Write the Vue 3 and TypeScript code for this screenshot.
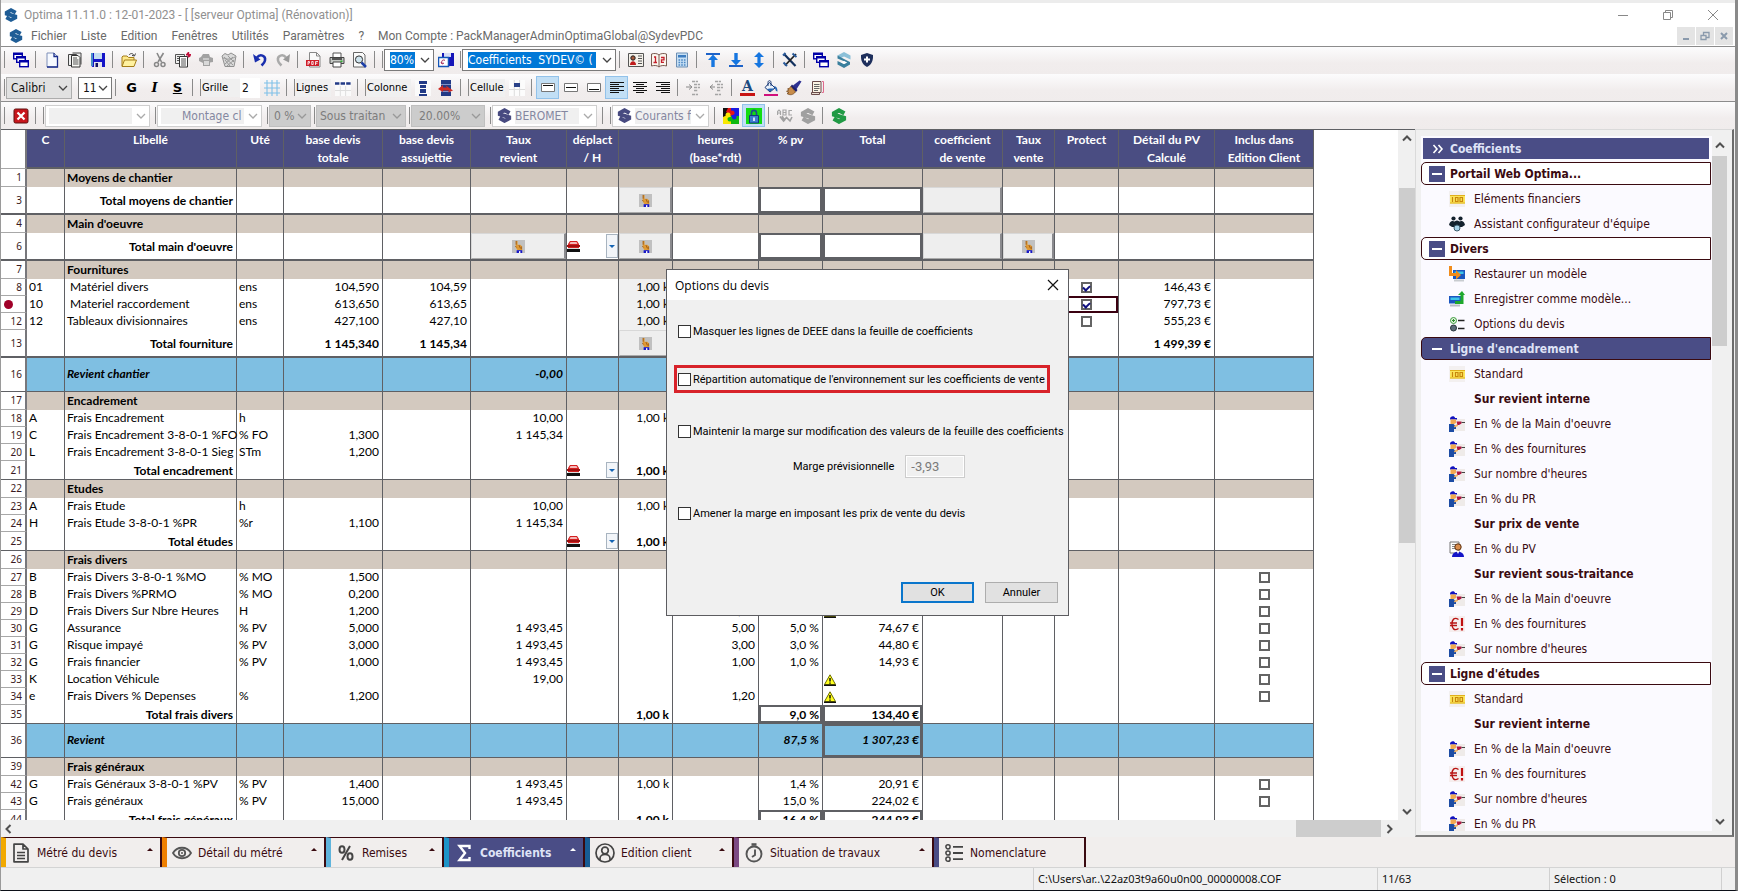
<script setup lang="ts">
type Kind = 'text' | 'button' | 'hand' | 'box' | 'car' | 'on' | 'off' | 'warn'
interface Cell { kind: Kind; text: string; shade?: boolean; focus?: boolean }
interface Column { key: string; title: string; w: number; align: 'start' | 'end' | 'center' }
interface Row { n: string; type: string; cells: Record<string, Cell | string> }
interface SideItem { label: string; icon?: string; type: 'group' | 'active' | 'item' | 'sub' }
interface Tab { label: string; icon: string; tone: string; w: number; active?: boolean; last?: boolean }

const columns: Column[] = [
  { key: 'c', title: 'C', w: 38, align: 'start' },
  { key: 'l', title: 'Libellé', w: 172, align: 'start' },
  { key: 'u', title: 'Uté', w: 47, align: 'start' },
  { key: 'bt', title: 'base devis\ntotale', w: 99, align: 'end' },
  { key: 'ba', title: 'base devis\nassujettie', w: 88, align: 'end' },
  { key: 'tr', title: 'Taux\nrevient', w: 96, align: 'end' },
  { key: 'dp', title: 'déplact\n/ H', w: 52, align: 'start' },
  { key: 'k', title: '', w: 54, align: 'end' },
  { key: 'hr', title: 'heures\n(base*rdt)', w: 86, align: 'end' },
  { key: 'pv', title: '% pv', w: 64, align: 'end' },
  { key: 'tot', title: 'Total', w: 100, align: 'end' },
  { key: 'cv', title: 'coefficient\nde vente', w: 80, align: 'end' },
  { key: 'tv', title: 'Taux\nvente', w: 52, align: 'end' },
  { key: 'pr', title: 'Protect', w: 64, align: 'center' },
  { key: 'det', title: 'Détail du PV\nCalculé', w: 96, align: 'end' },
  { key: 'inc', title: 'Inclus dans\nEdition Client', w: 99, align: 'center' },
]

const make = (kind: Kind, text = ''): Cell => ({ kind, text })
const hand = make('hand')
const blank = make('button')
const car = make('car')
const on = make('on')
const off = make('off')
const warn = make('warn')
const box = (text = '') => make('box', text)
const shaded: Cell = { kind: 'text', text: '1,00 k', shade: true }

const section = (n: string, l: string): Row => ({ n, type: 'section', cells: { l } })

const rows: Row[] = [
  section('1', 'Moyens de chantier'),
  { n: '3', type: 'total', cells: { l: 'Total moyens de chantier', k: hand, pv: box(), tot: box(), cv: blank } },
  section('4', "Main d'oeuvre"),
  { n: '6', type: 'total', cells: { l: "Total main d'oeuvre", tr: hand, dp: car, k: hand, pv: box(), tot: box(), cv: blank, tv: hand } },
  section('7', 'Fournitures'),
  { n: '8', type: 'line', cells: { c: '01', l: '\u00a0Matériel divers', u: 'ens', bt: '104,590', ba: '104,59', k: shaded, pr: on, det: '146,43 €' } },
  { n: '', type: 'line', cells: { c: '10', l: '\u00a0Materiel raccordement', u: 'ens', bt: '613,650', ba: '613,65', k: shaded, pr: { kind: 'on', text: '', focus: true }, det: '797,73 €' } },
  { n: '12', type: 'line', cells: { c: '12', l: 'Tableaux divisionnaires', u: 'ens', bt: '427,100', ba: '427,10', k: shaded, pr: off, det: '555,23 €' } },
  { n: '13', type: 'total', cells: { l: 'Total fourniture', bt: '1 145,340', ba: '1 145,34', k: hand, det: '1 499,39 €' } },
  { n: '16', type: 'sum', cells: { l: 'Revient chantier', tr: '-0,00' } },
  section('17', 'Encadrement'),
  { n: '18', type: 'line', cells: { c: 'A', l: 'Frais Encadrement', u: 'h', tr: '10,00', k: '1,00 k' } },
  { n: '19', type: 'line', cells: { c: 'C', l: 'Frais Encadrement 3-8-0-1 %FO', u: '% FO', bt: '1,300', tr: '1 145,34' } },
  { n: '20', type: 'line', cells: { c: 'L', l: 'Frais Encadrement 3-8-0-1 Sieg', u: 'STm', bt: '1,200' } },
  { n: '21', type: 'short', cells: { l: 'Total encadrement', dp: car, k: '1,00 k' } },
  section('22', 'Etudes'),
  { n: '23', type: 'line', cells: { c: 'A', l: 'Frais Etude', u: 'h', tr: '10,00', k: '1,00 k' } },
  { n: '24', type: 'line', cells: { c: 'H', l: 'Frais Etude 3-8-0-1 %PR', u: '%r', bt: '1,100', tr: '1 145,34' } },
  { n: '25', type: 'short', cells: { l: 'Total études', dp: car, k: '1,00 k' } },
  section('26', 'Frais divers'),
  { n: '27', type: 'line', cells: { c: 'B', l: 'Frais Divers 3-8-0-1 %MO', u: '% MO', bt: '1,500', inc: off } },
  { n: '28', type: 'line', cells: { c: 'B', l: 'Frais Divers %PRMO', u: '% MO', bt: '0,200', inc: off } },
  { n: '29', type: 'line', cells: { c: 'D', l: 'Frais Divers Sur Nbre Heures', u: 'H', bt: '1,200', hr: '1,20', tot: warn, inc: off } },
  { n: '30', type: 'line', cells: { c: 'G', l: 'Assurance', u: '% PV', bt: '5,000', tr: '1 493,45', hr: '5,00', pv: '5,0 %', tot: '74,67 €', inc: off } },
  { n: '31', type: 'line', cells: { c: 'G', l: 'Risque impayé', u: '% PV', bt: '3,000', tr: '1 493,45', hr: '3,00', pv: '3,0 %', tot: '44,80 €', inc: off } },
  { n: '32', type: 'line', cells: { c: 'G', l: 'Frais financier', u: '% PV', bt: '1,000', tr: '1 493,45', hr: '1,00', pv: '1,0 %', tot: '14,93 €', inc: off } },
  { n: '33', type: 'line', cells: { c: 'K', l: 'Location Véhicule', tr: '19,00', tot: warn, inc: off } },
  { n: '34', type: 'line', cells: { c: 'e', l: 'Frais Divers % Depenses', u: '%', bt: '1,200', hr: '1,20', tot: warn, inc: off } },
  { n: '35', type: 'short', cells: { l: 'Total frais divers', k: '1,00 k', pv: box('9,0 %'), tot: box('134,40 €') } },
  { n: '36', type: 'sum', cells: { l: 'Revient', pv: '87,5 %', tot: box('1 307,23 €') } },
  section('39', 'Frais généraux'),
  { n: '42', type: 'line', cells: { c: 'G', l: 'Frais Généraux 3-8-0-1 %PV', u: '% PV', bt: '1,400', tr: '1 493,45', k: '1,00 k', pv: '1,4 %', tot: '20,91 €', inc: off } },
  { n: '43', type: 'line', cells: { c: 'G', l: 'Frais généraux', u: '% PV', bt: '15,000', tr: '1 493,45', pv: '15,0 %', tot: '224,02 €', inc: off } },
  { n: '44', type: 'short', cells: { l: 'Total frais généraux', k: '1,00 k', pv: box('16,4 %'), tot: box('244,93 €') } },
]

function cellOf(row: Row, key: string): Cell {
  const v = row.cells[key]
  if (v === undefined) return { kind: 'text', text: '' }
  return typeof v === 'string' ? { kind: 'text', text: v } : v
}

const menus = ['Fichier', 'Liste', 'Edition', 'Fenêtres', 'Utilités', 'Paramètres', '?']

const fileGroups: string[][] = [
  ['cascade'],
  ['new', 'copy', 'save'],
  ['open'],
  ['cut', 'paste', 'case', 'bin'],
  ['undo', 'redo'],
  ['pdf', 'print', 'preview'],
]
const viewGroups: string[][] = [
  ['card', 'book', 'calc'],
  ['up', 'down', 'updown'],
  ['tools'],
  ['cascade', 'slight', 'shield'],
]

const side: SideItem[] = [
  { label: 'Portail Web Optima...', type: 'group' },
  { label: 'Eléments financiers', icon: 'hundred', type: 'item' },
  { label: "Assistant configurateur d'équipe", icon: 'team', type: 'item' },
  { label: 'Divers', type: 'group' },
  { label: 'Restaurer un modèle', icon: 'restore', type: 'item' },
  { label: 'Enregistrer comme modèle...', icon: 'store', type: 'item' },
  { label: 'Options du devis', icon: 'options', type: 'item' },
  { label: "Ligne d'encadrement", type: 'active' },
  { label: 'Standard', icon: 'hundred', type: 'item' },
  { label: 'Sur revient interne', type: 'sub' },
  { label: "En % de la Main d'oeuvre", icon: 'worker', type: 'item' },
  { label: 'En % des fournitures', icon: 'worker', type: 'item' },
  { label: "Sur nombre d'heures", icon: 'worker', type: 'item' },
  { label: 'En % du PR', icon: 'worker', type: 'item' },
  { label: 'Sur prix de vente', type: 'sub' },
  { label: 'En % du PV', icon: 'person', type: 'item' },
  { label: 'Sur revient sous-traitance', type: 'sub' },
  { label: "En % de la Main d'oeuvre", icon: 'worker', type: 'item' },
  { label: 'En % des fournitures', icon: 'euro', type: 'item' },
  { label: "Sur nombre d'heures", icon: 'worker', type: 'item' },
  { label: "Ligne d'études", type: 'group' },
  { label: 'Standard', icon: 'hundred', type: 'item' },
  { label: 'Sur revient interne', type: 'sub' },
  { label: "En % de la Main d'oeuvre", icon: 'worker', type: 'item' },
  { label: 'En % des fournitures', icon: 'euro', type: 'item' },
  { label: "Sur nombre d'heures", icon: 'worker', type: 'item' },
  { label: 'En % du PR', icon: 'worker', type: 'item' },
]

const tabs: Tab[] = [
  { label: 'Métré du devis', icon: 'tdoc', tone: 'yellow', w: 161 },
  { label: 'Détail du métré', icon: 'teye', tone: 'orange', w: 164 },
  { label: 'Remises', icon: 'tpct', tone: 'sky', w: 118 },
  { label: 'Coefficients', icon: 'tsum', tone: 'cyan', w: 141, active: true },
  { label: 'Edition client', icon: 'tuser', tone: 'blue', w: 149 },
  { label: 'Situation de travaux', icon: 'tclock', tone: 'purple', w: 200 },
  { label: 'Nomenclature', icon: 'tlist', tone: 'indigo', w: 152, last: true },
]
</script>

<template>
  <svg class="defs" aria-hidden="true">
    <symbol id="i-logo" viewBox="0 0 16 16"><path d="M13.4 5.4 8 2.4 3 5.2v1.5l10 3v1.4l-5 2.6-5.400-3" fill="none" stroke="currentColor" stroke-width="4.200" /></symbol>
    <symbol id="i-slight" viewBox="0 0 16 16"><path d="M8 0l6.500 3.500v4L8 4.500 4 6.500l-2.500-3z" fill="#8cc0d8" /><path d="M1.500 3.500 8 7l6 3v2.500L8 16l-6.500-3.500V9L8 12l3-1.500-9.500-4z" fill="#3a7f9d" /><path d="M8 12l3-1.500L8 9 5 10.500z" fill="#fff" /></symbol>
    <symbol id="i-cascade" viewBox="0 0 16 16"><g fill="#fff" stroke="#0000a8" stroke-width="1.400"><rect x=".7" y="1.200" width="8.600" height="5.600" /><path d="M.7 2h8.600" stroke-width="2" /><rect x="3.700" y="4.700" width="8.600" height="5.600" /><path d="M3.700 5.500h8.600" stroke-width="2" /><rect x="6.700" y="8.700" width="8.600" height="6" /><path d="M6.700 9.500h8.600" stroke-width="2" /></g></symbol>
    <symbol id="i-new" viewBox="0 0 16 16"><path d="M3 1h7l3.500 3.500V15H3z" fill="#f6f9ff" stroke="#7f8fb8" /><path d="M10 1v3.500h3.500V15H3" fill="none" stroke="#1b2e8c" stroke-width="1.300" /></symbol>
    <symbol id="i-copy" viewBox="0 0 16 16"><path d="M1.500 2.500h8v11h-8zM5.500 1h8.500v11.500" fill="#eee" stroke="#444" /><path d="M4.500 3.500h6.500l2 2V15H4.500z" fill="#f8f8f4" stroke="#333" /><path d="M6 6h4M6 8h5.500M6 10h5.500M6 12h5.500" stroke="#555" /></symbol>
    <symbol id="i-save" viewBox="0 0 16 16"><path d="M1 1h14v14H2.500L1 13.500z" fill="#1414c8" /><path d="M4 1h8v6H4z" fill="#c3dcf0" /><path d="M4 10h8v5H4z" fill="#e4e4ec" /><path d="M5.500 11h2.500v4H5.500z" fill="#111166" /><path d="M1 1h2v13H1z" fill="#4a90c8" /></symbol>
    <symbol id="i-open" viewBox="0 0 16 16"><path d="M1 14V5l1-1h4l1.500 1.500H13V8" fill="#ffe98a" stroke="#a47d18" /><path d="M1 14.500 3.500 8H15.500L13 14.500z" fill="#fff2a0" stroke="#a47d18" /><path d="M8 3c1.500-2 4-2 5 .5M14.500 1.500 13.500 4l-2.500-.6" fill="none" stroke="#444" /></symbol>
    <symbol id="i-cut" viewBox="0 0 16 16"><path d="M5 1l4.500 9M11.500 1 6 10" stroke="#888" stroke-width="1.600" /><g fill="none" stroke="#888" stroke-width="1.500"><circle cx="4.500" cy="12.500" r="2" /><circle cx="11" cy="12.500" r="2" /></g></symbol>
    <symbol id="i-paste" viewBox="0 0 16 16"><path d="M.5 2.500h9v9h-9z" fill="#eee" stroke="#555" /><path d="M4.500 4.500h8V15h-8z" fill="#fff" stroke="#333" /><path d="M6 7h5M6 9h5M6 11h5M6 13h5M2 4.500h2M2 6.500h2M2 8.500h2" stroke="#555" /><path d="M13.500 0v5.500M11 2.700h5M12 1l3.300 3.500" stroke="#c0103c" stroke-width="1.400" /></symbol>
    <symbol id="i-case" viewBox="0 0 16 16"><path d="M1 6l2-1 2-3h6l1 3 3 1v4l-3 .5V14H5v-3L1 9z" fill="#a2a2a2" /><path d="M6 9h5v4H6z" fill="#d9d9d9" /><path d="M5 7h6" stroke="#eee" /></symbol>
    <symbol id="i-bin" viewBox="0 0 16 16"><path d="M1 4l3-2.500L7 3l3-2 5 3-2 10.500H4z" fill="#dadada" stroke="#909090" /><path d="M3 5l9 8M7 4l6 6M12 5l-8 7M13 8l-7 6M4 8l5 6M2 6c4 2 8 1 12-1" stroke="#999" fill="none" /></symbol>
    <symbol id="i-undo" viewBox="0 0 16 16"><path d="M5 5.500C8 1.500 14 3.500 13 8.500c-.5 2.500-2 3.500-3.500 5" fill="none" stroke="#1a2fae" stroke-width="2.500" /><path d="M1 2l2 8.500 5.500-3z" fill="#1a2fae" /></symbol>
    <symbol id="i-redo" viewBox="0 0 16 16"><path d="M11 5.500C8 1.500 2 3.500 3 8.500c.5 2.500 2 3.500 3.500 5" fill="none" stroke="#aaa" stroke-width="2.500" /><path d="M15 2l-1 8.500-6-3z" fill="#999" /></symbol>
    <symbol id="i-pdf" viewBox="0 0 16 16"><path d="M3.500.500h7L14 4v11H3.500z" fill="#fafafa" stroke="#888" /><path d="M10.500.500V4H14" fill="none" stroke="#888" /><path d="M0 8h13v6H0z" fill="#cf1c28" /><path d="M2 13V9.500h1.500v1.600H2M5.700 9.500v3h1.500v-3zM9.500 13V9.500H12M9.500 11.200h2" fill="none" stroke="#fff" stroke-width=".8" /></symbol>
    <symbol id="i-print" viewBox="0 0 16 16"><path d="M4 1h8v5H4z" fill="#fff" stroke="#555" /><path d="M1 5.500h14v6H1z" fill="#c4c8c4" stroke="#444" /><path d="M3 6h10v2H3z" fill="#555" /><path d="M4 10h8v5H4z" fill="#fff" stroke="#444" /><path d="M11.500 8.500h2v1.500h-2z" fill="#2fb62f" /></symbol>
    <symbol id="i-preview" viewBox="0 0 16 16"><path d="M1.500.500h9L13 3v12H1.500z" fill="#fafafa" stroke="#666" /><circle cx="7" cy="7.500" r="3.600" fill="#cfe4ee" stroke="#333" /><path d="M9.500 10.500 14 15" stroke="#1d3fa8" stroke-width="2.500" /></symbol>
    <symbol id="i-zoomsave" viewBox="0 0 16 16"><path d="M4 1h12v13H4z" fill="#1414b8" /><path d="M6 1h7v4H6z" fill="#d6dcf4" /><path d="M.500 5.500h10v9H.500z" fill="#fff" stroke="#1456b8" stroke-width="1.500" /><path d="M7 8.500C5 7 3 9 4 11M3 10l1 2 2-1" stroke="#a02050" fill="none" /></symbol>
    <symbol id="i-card" viewBox="0 0 16 16"><path d="M.500 1.500h15v13H.500z" fill="#f4f1ea" stroke="#555" /><circle cx="5" cy="6" r="2.200" fill="#a85a3c" stroke="#222" /><path d="M2 13c0-5 6-5 6 0z" fill="#c01c1c" /><path d="M10 4h4M10 6.500h4M10 9h4M10 11.500h4" stroke="#555" /></symbol>
    <symbol id="i-book" viewBox="0 0 16 16"><path d="M.500 2c3-1 6-.5 7.500 1 1.500-1.500 4.500-2 7.500-1v12c-3-1-6-.5-7.500 1-1.500-1.500-4.500-2-7.500-1z" fill="#fbf6ee" stroke="#7a5a50" /><path d="M8 3v12" stroke="#7a5a50" /><path d="M3 5h1.500v5M2.500 10.500H6M10 5.500h3v2.300h-2.500v2.500H13" fill="none" stroke="#c4202c" stroke-width="1.300" /></symbol>
    <symbol id="i-calc" viewBox="0 0 16 16"><path d="M2.500 1h11v14h-11z" fill="#c8e0f4" stroke="#6d8fb4" /><path d="M4 3h8v2.500H4z" fill="#3c7cc0" /><path d="M4.500 8h7M4.500 10.500h7M4.500 13h7" stroke="#4a86c4" stroke-width="1.400" stroke-dasharray="1.600 1.100" /></symbol>
    <symbol id="i-up" viewBox="0 0 16 16"><path d="M1 1h14v2H1z" fill="#1d62c8" /><path d="M8 2.500l5 5.500H9.700v7H6.300V8H3z" fill="#1676e0" /></symbol>
    <symbol id="i-down" viewBox="0 0 16 16"><path d="M1 13h14v2H1z" fill="#1d62c8" /><path d="M8 13.500 3 8h3.300V1h3.400v7H13z" fill="#1676e0" /></symbol>
    <symbol id="i-updown" viewBox="0 0 16 16"><path d="M8 0l5 5H9.600v6H13l-5 5-5-5h3.400V5H3z" fill="#1676e0" /></symbol>
    <symbol id="i-tools" viewBox="0 0 16 16"><path d="M2 2l11.500 12" stroke="#12305e" stroke-width="2.200" /><path d="M14 2 3 13.500" stroke="#222" stroke-width="1.800" /><path d="M10.500 1.500 14.500 5M1 3.500 3.500 1M1.500 10.500l3.500 3.500" stroke="#2a5a9a" stroke-width="2" /></symbol>
    <symbol id="i-shield" viewBox="0 0 16 16"><path d="M8 1l6 2c.3 6-1.500 9.500-6 12C3.500 12.500 1.700 9 2 3z" fill="#1e2f5c" /><path d="M8 4.500v6M5 7.500h6" stroke="#fff" stroke-width="2" /></symbol>
    <symbol id="i-grid" viewBox="0 0 16 16"><path d="M3 0v16M8 0v16M13 0v16M0 3h16M0 8h16M0 13h16" stroke="#7fc0e8" stroke-width="1.100" /></symbol>
    <symbol id="i-rows" viewBox="0 0 16 16"><path d="M0 0h16v16H0z" fill="#fafafa" /><path d="M5.300 6v10M10.600 6v10M0 10.500h16" stroke="#dedede" /><path d="M0 3.500h16" stroke="#223a86" stroke-width="2.600" stroke-dasharray="4.400 1.200" /></symbol>
    <symbol id="i-col" viewBox="0 0 16 16"><path d="M0 0h16v16H0z" fill="#fafafa" /><path d="M4 1h8v3H4zM4 14h8v2H4zM5 5h6v3H5zM5 9h6v4H5z" fill="#223a86" /></symbol>
    <symbol id="i-colswap" viewBox="0 0 16 16"><path d="M3 0h10v16H3z" fill="#223a86" /><path d="M3 4.500h10M3 11.500h10" stroke="#7f92c8" /><path d="M0 9l5-4v2.500h4L7 5l8 5.500-5 2 1-2H5V12z" fill="#cc2a24" /></symbol>
    <symbol id="i-cell" viewBox="0 0 16 16"><path d="M0 0h16v16H0z" fill="#fcfcfc" /><path d="M5.300 0v16M10.600 0v16M0 9.500h16" stroke="#ddd" /><path d="M5 3h6v4H5z" fill="#2a4288" /></symbol>
    <symbol id="i-vtop" viewBox="0 0 16 16"><path d="M1.500 3.500h13v8h-13z" fill="#fff" stroke="#777" /><path d="M3 6l1-1 1 1 1-1 1 1 1-1 1 1 1-1 1 1 1-1 1 1" fill="none" stroke="#111" /></symbol>
    <symbol id="i-vmid" viewBox="0 0 16 16"><path d="M1.500 3.500h13v8h-13z" fill="#fff" stroke="#777" /><path d="M3 8l1-1 1 1 1-1 1 1 1-1 1 1 1-1 1 1 1-1 1 1" fill="none" stroke="#111" /></symbol>
    <symbol id="i-vbot" viewBox="0 0 16 16"><path d="M1.500 3.500h13v8h-13z" fill="#fff" stroke="#777" /><path d="M3 10l1-1 1 1 1-1 1 1 1-1 1 1 1-1 1 1 1-1 1 1" fill="none" stroke="#111" /></symbol>
    <symbol id="i-aleft" viewBox="0 0 16 16"><path d="M1 2.500h14M1 4.500h9M1 6.500h14M1 8.500h9M1 10.500h14M1 12.500h9" stroke="#111" /></symbol>
    <symbol id="i-amid" viewBox="0 0 16 16"><path d="M1 2.500h14M4 4.500h8M1 6.500h14M4 8.500h8M1 10.500h14M4 12.500h8" stroke="#111" /></symbol>
    <symbol id="i-aright" viewBox="0 0 16 16"><path d="M1 2.500h14M6 4.500h9M1 6.500h14M6 8.500h9M1 10.500h14M6 12.500h9" stroke="#111" /></symbol>
    <symbol id="i-indent" viewBox="0 0 16 16"><path d="M6 1.500h6M8 4.500h6M8 7.500h6M8 10.500h4M6 14.500h6" stroke="#a4a4a4" stroke-width="1.400" stroke-dasharray="3 .8" /><path d="M0 7h5M3 4.500 6 7 3 9.500" fill="none" stroke="#888" /></symbol>
    <symbol id="i-outdent" viewBox="0 0 16 16"><path d="M6 1.500h6M8 4.500h6M8 7.500h6M8 10.500h4M6 14.500h6" stroke="#a4a4a4" stroke-width="1.400" stroke-dasharray="3 .8" /><path d="M1 7h5M4 4.500 1 7l3 2.500" fill="none" stroke="#888" /></symbol>
    <symbol id="i-bucket" viewBox="0 0 16 16"><path d="M6.500 2.500 12 8l-5 4-5-4.500z" fill="#eaf2fb" stroke="#1c3c78" /><path d="M5 6V2.500C5 0 8 0 8 2.500V6" fill="none" stroke="#1c3c78" /><path d="M11 6c3 .5 3.500 3 3.500 5.500-1.500 0-2-1-2.500-3.500z" fill="#2464b4" /><path d="M7 8.500h4.500L7 11.500 4 9z" fill="#2464b4" /><path d="M1 14h14v2H1z" fill="#d0107c" /></symbol>
    <symbol id="i-brush" viewBox="0 0 16 16"><path d="M15.500 1.500 13.500.500 7 5.500l3 4.500z" fill="#2e3192" /><path d="M6 4.500l5.500 5.500-1.500 2-5.500-5.500z" fill="#1d1f70" /><path d="M5 6.500 9.500 12C7 15 4 15.500 1 13.500l2-1-2.500-1.200L3 10l-1.500-1C3 8.500 4 7.800 5 6.500z" fill="#c88c4a" stroke="#6a4018" stroke-width=".7" /></symbol>
    <symbol id="i-page" viewBox="0 0 16 16"><path d="M3.500 1.500h8.500v11H3.500z" fill="#fdf4e4" stroke="#6a4a4a" /><path d="M2.500 12.500h8v2h-8z" fill="#e8dcd0" stroke="#6a4a4a" /><path d="M5 4.500h5.500M5 6.500h5.500M5 8.500h5.500M5 10.500h4" stroke="#666" /><path d="M13 1.500h1.500v11H13" fill="none" stroke="#e06a8c" /></symbol>
    <symbol id="i-stop" viewBox="0 0 16 16"><rect x="1" y="1" width="14" height="14" rx="1.500" fill="#c8161c" stroke="#5c1010" /><path d="M4.500 4.500l7 7M11.500 4.500l-7 7" stroke="#fff" stroke-width="2.200" /></symbol>
    <symbol id="i-puzzle" viewBox="0 0 16 16"><path d="M0 0h8v8H0z" fill="#e81414" /><path d="M8 0h8v8H8z" fill="#1a1ae0" /><path d="M0 8h8v8H0z" fill="#f8e800" /><path d="M8 8h8v8H8z" fill="#10b810" /><path d="M0 0h5L3 4l3 2-6 3z" fill="#111" /><circle cx="9" cy="5" r="2.500" fill="#e81414" /><circle cx="11" cy="9" r="2.500" fill="#1a1ae0" /><circle cx="7" cy="11" r="2.500" fill="#10b810" /><circle cx="5" cy="7" r="2.500" fill="#f8e800" /></symbol>
    <symbol id="i-lock" viewBox="0 0 16 16"><path d="M0 0h16v16H0z" fill="#12dc12" /><path d="M5.500 8V5c0-3.500 5-3.500 5 0v3" fill="none" stroke="#1e4c8c" stroke-width="1.600" /><path d="M3.500 7.500h9V15h-9z" fill="#3c7cd0" stroke="#143a78" /><path d="M8 9.500V13" stroke="#fff" stroke-width="1.500" /></symbol>
    <symbol id="i-spell" viewBox="0 0 16 16"><path d="M.500 7V3.500L2 2l1.500 1.500V7M.500 5h3M6 2v5h3V2zM6 4.500h3M15 2.500h-3V7h3" fill="none" stroke="#a6a6a6" stroke-width="1.200" /><path d="M3 8.500 6.500 13l3-3.500L13 13l2-4M5 8l3 5" fill="none" stroke="#a0a0a0" stroke-width="1.600" /></symbol>
    <symbol id="i-hand" viewBox="0 0 14 14"><path d="M0 0h14v14H0z" fill="#c0c0c0" /><path d="M4 1h2v4h3l2 2v4H6L4 8z" fill="#e09a34" /><path d="M4.500 1v4M3.500 6.500 5 8M7.500 5.500 9 9M10 7v3" stroke="#8c4a10" fill="none" stroke-width=".8" /><path d="M5 11h6v3H5z" fill="#1616c8" /><path d="M7.500 12h1.500v2H7.500z" fill="#fff" /></symbol>
    <symbol id="i-car" viewBox="0 0 13 12"><path d="M3 1h7l2 3v4H1V4z" fill="#d42020" /><path d="M3.500 2h6l1 2h-8z" fill="#f4b8b8" /><path d="M0 5h13v2H0z" fill="#a01010" /><path d="M1 8h11v1H1z" fill="#ddd" /><path d="M0 9h13v3H0z" fill="#111" /></symbol>
    <symbol id="i-warn" viewBox="0 0 12 12"><path d="M6 .800 11.500 10.500H.500z" fill="#ffff1e" stroke="#6c6c00" /><path d="M0 11.300h12" stroke="#111" stroke-width="1.400" /><path d="M6 4v3.500M6 8.500v1.300" stroke="#111" stroke-width="1.500" /></symbol>
    <symbol id="i-hundred" viewBox="0 0 16 16"><path d="M0 0h16v16H0z" fill="#f3f0f0" /><path d="M1 4h15v8.500H1z" fill="#fbe55a" /><path d="M1 4.500h15M1 12h15" stroke="#e0b01c" /><path d="M3.500 6v5M6.500 6.500h2.500v4H6.500zM11 6.500h2.500v4H11z" fill="none" stroke="#c8860c" stroke-width="1.200" /></symbol>
    <symbol id="i-team" viewBox="0 0 16 16"><g fill="#14222e"><circle cx="4.500" cy="2.500" r="2.100" /><circle cx="11.500" cy="2.500" r="2.100" /><path d="M0 9c1-4 3-4.500 5-3.500h6c2-1 4-.5 5 3.500l-3 2H3z" /><circle cx="8" cy="7" r="2.500" /></g><circle cx="8" cy="12" r="3" fill="#a8d4ea" stroke="#3c5c6c" /></symbol>
    <symbol id="i-restore" viewBox="0 0 16 16"><path d="M4 4h12v9H4z" fill="#1a56c0" /><path d="M5.500 5.500h9V8h-9z" fill="#3cc4e8" /><path d="M5 13.500h10v2H5z" fill="#c8ccd0" /><path d="M0 0h3v7h4V4l5 5-5 4.500V10H0z" fill="#f08c1c" /></symbol>
    <symbol id="i-store" viewBox="0 0 16 16"><path d="M0 5h12v7.500H0z" fill="#1a56c0" /><path d="M1.500 6.500h9V9h-9z" fill="#3cc4e8" /><path d="M1 13.500h10v2H1z" fill="#b8bcc4" /><path d="M6 10h5.500V4H9l4-4 3 4h-1.500v9L12 13H6z" fill="#1ea82c" /></symbol>
    <symbol id="i-options" viewBox="0 0 16 16"><circle cx="4.500" cy="4.500" r="3" fill="#e4f4e0" stroke="#3c9c3c" /><path d="M4.500 3v3M3 4.500h3" stroke="#2c8c2c" /><circle cx="4.500" cy="12" r="3" fill="#5c6c78" stroke="#28343c" /><path d="M9 4.500h6.500M9 12.500h6.500" stroke="#222" stroke-width="1.600" /></symbol>
    <symbol id="i-worker" viewBox="0 0 16 16"><path d="M3 3h13v12H3z" fill="#efebe9" /><path d="M1 3C1-.5 6-.5 6 2h2v1.500H1z" fill="#1010c0" /><path d="M1.500 3.500H7V7l-2 1H1.500z" fill="#f0a850" /><path d="M0 8h4.500L7 10.500V13H5v3H0z" fill="#1c4ca4" /><path d="M5.500 11.500 9 10V8.500H7.500L5 10z" fill="#f0b060" /><path d="M7.500 5.500h5v2L10 9H8.500z" fill="#b01440" /><path d="M12.500 6.500H16" stroke="#444" /></symbol>
    <symbol id="i-person" viewBox="0 0 16 16"><path d="M1 1h9v11H1z" fill="#fff" stroke="#777" /><path d="M3 3.500h4M3 5.500h3M3 7.500h3" stroke="#888" /><circle cx="9" cy="6" r="3.200" fill="#d88c4c" stroke="#5c3010" /><path d="M3 16c0-7 12-7 12 0z" fill="#1414c8" /><path d="M7.500 10h3L9 13z" fill="#fff" /></symbol>
    <symbol id="i-euro" viewBox="0 0 16 16"><path d="M0 0h16v16H0z" fill="#f6eeee" /><path d="M9.500 3.500C5 .5 3 4 3 8s2 7.500 6.500 4.500M1 7h7M1 9.500h7" fill="none" stroke="#b81414" stroke-width="1.400" /><path d="M13 2v8M13 12v2.500" stroke="#c01010" stroke-width="2.200" /></symbol>
    <symbol id="i-tdoc" viewBox="0 0 20 20"><path d="M3 1.200h9L17 6v12.800H3z M12 1.200V6h5M6 9.500h8M6 12.500h8M6 15.500h8" fill="none" stroke="#444" stroke-width="1.700" stroke-linejoin="round" /></symbol>
    <symbol id="i-teye" viewBox="0 0 20 20"><path d="M1 10C5 3 15 3 19 10 15 17 5 17 1 10z" fill="none" stroke="#555" stroke-width="1.800" /><circle cx="10" cy="10" r="3.200" fill="none" stroke="#555" stroke-width="1.800" /><circle cx="10" cy="10" r="1" fill="#555" /></symbol>
    <symbol id="i-tpct" viewBox="0 0 20 20"><g fill="none" stroke="#444" stroke-width="2"><path d="M14 3 6 17" /><ellipse cx="6" cy="6.500" rx="2.500" ry="3.300" /><ellipse cx="14" cy="13.500" rx="2.500" ry="3.300" /></g></symbol>
    <symbol id="i-tsum" viewBox="0 0 20 20"><path d="M15.500 6V3H5.500l5.500 7-5.500 7h10v-3" fill="none" stroke="#fff" stroke-width="2.400" /></symbol>
    <symbol id="i-tuser" viewBox="0 0 20 20"><g fill="none" stroke="#444" stroke-width="1.700"><circle cx="10" cy="10" r="9" /><circle cx="10" cy="7.500" r="3.300" /><path d="M5 17v-1.500c0-5.500 10-5.500 10 0V17" /></g></symbol>
    <symbol id="i-tclock" viewBox="0 0 20 20"><g fill="none" stroke="#555" stroke-width="1.900"><circle cx="10" cy="11" r="7.500" /><path d="M7.500 1.500h5" stroke-width="2.600" /><path d="M11 6.500V12l-3 2" /></g></symbol>
    <symbol id="i-tlist" viewBox="0 0 20 20"><g fill="none" stroke="#444" stroke-width="1.500"><circle cx="4" cy="3.800" r="2.100" /><circle cx="4" cy="10" r="2.100" /><circle cx="4" cy="16.200" r="2.100" /><path d="M9 3.800h10M9 10h10M9 16.200h10" stroke-width="1.800" /></g></symbol>
    <symbol id="i-chev" viewBox="0 0 10 10"><path d="M1 3l4 4 4-4" fill="none" stroke="currentColor" stroke-width="1.300" /></symbol>
    <symbol id="i-arrow" viewBox="0 0 10 10"><path d="M1 6.500 5 2.500l4 4" fill="none" stroke="#505050" stroke-width="2" /></symbol>
  </svg>

  <div class="window">
    <header class="titlebar">
      <svg class="logo"><use href="#i-logo" /></svg>
      <span class="title">Optima 11.11.0 : 12-01-2023 - [ [serveur Optima] (Rénovation)]</span>
      <div class="winbtns">
        <button aria-label="Réduire"><svg viewBox="0 0 12 12"><path d="M1 6.500h10" /></svg></button>
        <button aria-label="Restaurer"><svg viewBox="0 0 12 12"><path d="M1.500 3.500h7v7h-7zM3.500 3.500v-2h7v7h-2" /></svg></button>
        <button aria-label="Fermer"><svg viewBox="0 0 12 12"><path d="M1 1l10 10M11 1 1 11" /></svg></button>
      </div>
    </header>

    <nav class="menubar">
      <svg class="logo"><use href="#i-logo" /></svg>
      <button v-for="m in menus" :key="m">{{ m }}</button>
      <span class="account">Mon Compte : PackManagerAdminOptimaGlobal@SydevPDC</span>
      <div class="mdibtns">
        <button aria-label="Réduire le document"><svg viewBox="0 0 10 10"><path d="M2 8h6" /></svg></button>
        <button aria-label="Restaurer le document"><svg viewBox="0 0 10 10"><path d="M1 4.500h5v4H1zM3.500 4V1.500h5.500v5H6.500" stroke-width="1.300" /></svg></button>
        <button aria-label="Fermer le document"><svg viewBox="0 0 10 10"><path d="M2 2l6 6M8 2 2 8" /></svg></button>
      </div>
    </nav>

    <div class="toolbar first">
      <template v-for="(g, gi) in fileGroups" :key="gi">
        <i class="sep"></i>
        <button v-for="ic in g" :key="ic" class="tb" :aria-label="ic"><svg><use :href="'#i-' + ic" /></svg></button>
      </template>
      <i class="sep"></i>
      <i class="sep tight"></i>
      <span class="combo zoom"><select aria-label="Zoom"><option>80%</option></select><svg><use href="#i-chev" /></svg></span>
      <button class="tb" aria-label="Enregistrer le zoom"><svg><use href="#i-zoomsave" /></svg></button>
      <i class="sep tight"></i>
      <span class="combo model"><select aria-label="Modèle"><option>Coefficients&nbsp;&nbsp;SYDEV© (</option></select><svg><use href="#i-chev" /></svg></span>
      <template v-for="(g, gi) in viewGroups" :key="gi">
        <i class="sep"></i>
        <button v-for="ic in g" :key="ic" class="tb" :aria-label="ic"><svg><use :href="'#i-' + ic" /></svg></button>
      </template>
    </div>

    <div class="toolbar">
      <i class="sep tight"></i>
      <span class="combo font"><select aria-label="Police"><option>Calibri</option></select><svg><use href="#i-chev" /></svg></span>
      <span class="combo size"><select aria-label="Taille"><option>11</option></select><svg><use href="#i-chev" /></svg></span>
      <i class="sep"></i>
      <button class="tb letter bold">G</button>
      <button class="tb letter ital">I</button>
      <button class="tb letter under">S</button>
      <i class="sep"></i>
      <i class="sep tight"></i>
      <label class="tag grille" for="grille">Grille</label>
      <input id="grille" class="num" value="2">
      <button class="tb" aria-label="Grille"><svg><use href="#i-grid" /></svg></button>
      <i class="sep"></i>
      <i class="sep tight"></i>
      <span class="tag">Lignes</span>
      <button class="tb" aria-label="Lignes"><svg><use href="#i-rows" /></svg></button>
      <i class="sep"></i>
      <i class="sep tight"></i>
      <span class="tag colonne">Colonne</span>
      <button class="tb" aria-label="Colonne"><svg><use href="#i-col" /></svg></button>
      <button class="tb" aria-label="Déplacer la colonne"><svg><use href="#i-colswap" /></svg></button>
      <i class="sep"></i>
      <i class="sep tight"></i>
      <span class="tag">Cellule</span>
      <button class="tb" aria-label="Cellule"><svg><use href="#i-cell" /></svg></button>
      <i class="sep"></i>
      <button v-for="ic in ['vtop', 'vmid', 'vbot', 'aleft', 'amid', 'aright']" :key="ic" class="tb" :class="{ on: ic === 'vtop' || ic === 'aleft' }" :aria-label="ic"><svg><use :href="'#i-' + ic" /></svg></button>
      <i class="sep"></i>
      <button v-for="ic in ['indent', 'outdent']" :key="ic" class="tb" :aria-label="ic"><svg><use :href="'#i-' + ic" /></svg></button>
      <i class="sep"></i>
      <button class="tb letter color">A</button>
      <button v-for="ic in ['bucket', 'brush', 'page']" :key="ic" class="tb" :aria-label="ic"><svg><use :href="'#i-' + ic" /></svg></button>
    </div>

    <div class="toolbar third">
      <i class="sep"></i>
      <button class="tb" aria-label="Annuler la saisie"><svg><use href="#i-stop" /></svg></button>
      <i class="sep"></i>
      <i class="sep tight"></i>
      <span class="combo off wide"><select aria-label="Choix" disabled><option></option></select><svg><use href="#i-chev" /></svg></span>
      <i class="sep tight"></i>
      <span class="combo off wide mont"><select aria-label="Montage" disabled><option>Montage cl</option></select><svg><use href="#i-chev" /></svg></span>
      <i class="sep tight"></i>
      <span class="combo off gray pct"><select aria-label="Pourcentage" disabled><option>0 %</option></select><svg><use href="#i-chev" /></svg></span>
      <i class="sep tight"></i>
      <span class="combo off gray sous"><select aria-label="Sous-traitance" disabled><option>Sous traitan</option></select><svg><use href="#i-chev" /></svg></span>
      <i class="sep tight"></i>
      <span class="combo off gray rate"><select aria-label="Taux" disabled><option>20.00%</option></select><svg><use href="#i-chev" /></svg></span>
      <i class="sep tight"></i>
      <span class="combo off wide brand"><svg class="mark"><use href="#i-logo" /></svg><select aria-label="Société" disabled><option>BEROMET</option></select><svg><use href="#i-chev" /></svg></span>
      <i class="sep"></i>
      <i class="sep tight"></i>
      <span class="combo off brand cour"><svg class="mark"><use href="#i-logo" /></svg><select aria-label="Activité" disabled><option>Courants f</option></select><svg><use href="#i-chev" /></svg></span>
      <i class="sep"></i>
      <button class="tb" aria-label="Couleurs"><svg><use href="#i-puzzle" /></svg></button>
      <button class="tb on" aria-label="Verrou"><svg><use href="#i-lock" /></svg></button>
      <i class="sep"></i>
      <button class="tb" aria-label="Orthographe"><svg><use href="#i-spell" /></svg></button>
      <button class="tb dim" aria-label="Optima inactif"><svg><use href="#i-logo" /></svg></button>
      <i class="sep"></i>
      <button class="tb green" aria-label="Optima"><svg><use href="#i-logo" /></svg></button>
    </div>

    <main class="body">
      <section class="sheet">
        <div class="sheetrow">
          <div class="clip">
            <table class="grid">
              <colgroup>
                <col class="numcol">
                <col v-for="c in columns" :key="c.key" :style="{ width: c.w + 'px' }">
              </colgroup>
              <thead>
                <tr>
                  <th class="rn"></th>
                  <th v-for="c in columns" :key="c.key" scope="col">{{ c.title }}</th>
                </tr>
              </thead>
              <tbody>
                <tr v-for="(r, ri) in rows" :key="ri" :class="r.type">
                  <th class="rn" scope="row"><template v-if="r.n">{{ r.n }}</template><i v-else class="dot"></i></th>
                  <td v-for="c in columns" :key="c.key" :class="['a-' + c.align, 'k-' + cellOf(r, c.key).kind, 'c-' + c.key, { shade: cellOf(r, c.key).shade, focus: cellOf(r, c.key).focus }]">
                    <template v-if="cellOf(r, c.key).kind === 'text' || cellOf(r, c.key).kind === 'box'">{{ cellOf(r, c.key).text }}</template>
                    <button v-else-if="cellOf(r, c.key).kind === 'hand'" class="cellbtn" aria-label="Détail"><svg class="hand"><use href="#i-hand" /></svg></button>
                    <button v-else-if="cellOf(r, c.key).kind === 'button'" class="cellbtn" aria-label="Détail"></button>
                    <span v-else-if="cellOf(r, c.key).kind === 'car'" class="carcell"><svg class="car"><use href="#i-car" /></svg><button aria-label="Choisir le déplacement"></button></span>
                    <svg v-else-if="cellOf(r, c.key).kind === 'warn'" class="warn"><use href="#i-warn" /></svg>
                    <input v-else type="checkbox" :aria-label="c.title" :checked="cellOf(r, c.key).kind === 'on'">
                  </td>
                </tr>
              </tbody>
            </table>
          </div>
          <div class="vbar">
            <svg><use href="#i-arrow" /></svg>
            <i class="vthumb"></i>
            <svg class="flip"><use href="#i-arrow" /></svg>
          </div>
        </div>
        <div class="hbar">
          <svg class="toleft"><use href="#i-arrow" /></svg>
          <i class="hthumb"></i>
          <svg class="toright"><use href="#i-arrow" /></svg>
        </div>
      </section>

      <aside class="side">
        <div class="sidelist">
          <div class="sidehead"><svg viewBox="0 0 12 12"><path d="M1.500 2l3.500 4-3.500 4M6.500 2l3.500 4-3.500 4" /></svg>Coefficients</div>
          <button v-for="(s, i) in side" :key="i" class="siderow" :class="s.type">
            <span v-if="s.type === 'group' || s.type === 'active'" class="minus"></span>
            <svg v-else-if="s.icon"><use :href="'#i-' + s.icon" /></svg>
            {{ s.label }}
          </button>
        </div>
        <div class="vbar">
          <svg><use href="#i-arrow" /></svg>
          <i class="vthumb"></i>
          <svg class="flip"><use href="#i-arrow" /></svg>
        </div>
      </aside>
    </main>

    <nav class="tabs">
      <button v-for="t in tabs" :key="t.label" class="tab" :class="[t.tone, { active: t.active }]" :style="{ width: t.w + 'px' }">
        <svg><use :href="'#i-' + t.icon" /></svg>
        <span>{{ t.label }}</span>
        <i v-if="!t.last"></i>
      </button>
    </nav>

    <footer class="status">
      <span class="s1">C:\Users\ar..\22az03t9a60u0n00_00000008.COF</span>
      <span class="s2">11/63</span>
      <span class="s3">Sélection : 0</span>
      <span class="s4"></span>
    </footer>

    <div class="dialog" role="dialog" aria-labelledby="dlg">
      <div class="dtitle">
        <span id="dlg">Options du devis</span>
        <button aria-label="Fermer la boîte"><svg viewBox="0 0 12 12"><path d="M1 1l10 10M11 1 1 11" /></svg></button>
      </div>
      <div class="dbody">
        <label class="opt"><input type="checkbox">Masquer les lignes de DEEE dans la feuille de coefficients</label>
        <label class="opt red"><input type="checkbox">Répartition automatique de l'environnement sur les coefficients de vente</label>
        <label class="opt"><input type="checkbox">Maintenir la marge sur modification des valeurs de la feuille des coefficients</label>
        <div class="marge"><label for="marge">Marge prévisionnelle</label><input id="marge" value="-3,93" disabled></div>
        <label class="opt"><input type="checkbox">Amener la marge en imposant les prix de vente du devis</label>
        <div class="dbtns"><button class="ok">OK</button><button>Annuler</button></div>
      </div>
    </div>
  </div>
</template>

<style>
html, body { margin: 0; height: 100%; overflow: hidden; }
#app { height: 100%; }
</style>

<style scoped>
* { box-sizing: border-box; }
button, input, select { font: inherit; color: inherit; margin: 0; padding: 0; border: 0; border-radius: 0; background: none; appearance: none; }
.defs { display: none; }
.window { position: relative; display: flex; flex-direction: column; height: 100%; border-left: 1px solid #9a9a9a; border-right: 3px solid #8a8a8a; border-bottom: 1px solid #0c1018; background: #f0f0f0; font-family: "DejaVu Sans Condensed", "Noto Sans", sans-serif; font-size: 12px; color: #111; overflow: hidden; }

.titlebar { display: flex; align-items: center; height: 25px; padding: 2px 0 0 3px; background: #fff; border-top: 3px solid #ececec; font-family: Roboto, "Noto Sans", sans-serif; color: #909090; flex: none; }
.logo { width: 14px; height: 16px; color: #1f5d96; margin-right: 6px; }
.winbtns { margin-left: auto; display: flex; }
.winbtns button { width: 45px; height: 22px; display: grid; place-items: center; }
.winbtns svg { width: 12px; height: 12px; fill: none; stroke: #888; }
.menubar { display: flex; align-items: center; height: 22px; padding-left: 8px; background: #fff; border-bottom: 1px solid #8c8c8c; font-family: Roboto, "Noto Sans", sans-serif; color: #6a6a6a; flex: none; }
.menubar > button { margin: 0 7px; }
.menubar .logo { margin-right: 1px; }
.account { margin-left: 7px; }
.mdibtns { margin-left: auto; display: flex; gap: 1px; padding-right: 2px; }
.mdibtns button { width: 18px; height: 18px; background: #e4e4e4; display: grid; place-items: center; }
.mdibtns svg { width: 10px; height: 10px; fill: none; stroke: #8a9aac; stroke-width: 2; }

.toolbar { display: flex; align-items: center; height: 27px; background: linear-gradient(#fcfcfd, #f1eded 60%, #f0ecec); flex: none; font-size: 12px; }
.toolbar.first { padding-bottom: 2px; }
.toolbar.third { border-top: 1px solid #8c8c8c; height: 28px; }
.sep { width: 1px; height: 17px; background: #8a8a8a; margin: 0 4px 0 3px; flex: none; }
.sep.tight { margin-right: 1px; }
.tb { width: 23px; height: 23px; display: grid; place-items: center; flex: none; }
.tb svg { width: 16px; height: 16px; }
.tb.on { background: #c2dff5; border: 1px solid #92c2ea; }
.tb.dim { color: #a0a0a0; }
.tb.green { color: #219a45; }
.letter { font-family: "DejaVu Serif", serif; font-size: 13px; font-weight: bold; color: #000; line-height: 20px; }
.letter.bold { font-family: "DejaVu Sans", sans-serif; }
.letter.ital { font-style: italic; }
.letter.under { text-decoration: underline; font-family: "DejaVu Sans", sans-serif; }
.letter.color { color: #1b4a80; font-size: 14px; line-height: 14px; height: 17px; width: 15px; margin: 0 4px; border-bottom: 3px solid #c81414; }
.combo { position: relative; display: flex; align-items: center; height: 22px; border: 1px solid #7a7a7a; background: #fff; flex: none; }
.combo select { flex: 1; min-width: 0; height: 16px; padding: 0 4px; white-space: nowrap; overflow: hidden; text-overflow: clip; opacity: 1; }
.combo > svg { width: 10px; height: 10px; margin-right: 3px; color: #444; flex: none; }
.zoom { width: 50px; }
.zoom select { flex: none; width: 25px; margin: 0 auto 0 5px; padding: 0; background: #0078d7; color: #fff; }
.model { width: 154px; }
.model select { flex: none; width: 128px; margin: 0 auto 0 5px; padding: 0; background: #0078d7; color: #fff; }
.font { width: 66px; background: #e1e1e1; border-color: #adadad; }
.size { width: 34px; margin-left: 6px; }
.size select { padding-right: 0; }
.off { border-color: #cfcfcf; color: #8487a0; }
.off select { background: #f0f0f0; margin: 0 4px 0 3px; }
.off > svg { color: #aaa; }
.off .mark { color: #474a80; width: 15px; height: 15px; margin: 0 0 0 4px; }
.off.gray { background: #cccccc; border-color: #bfbfbf; color: #7c7c7c; }
.off.gray select { background: none; }
.off.gray > svg { color: #999; }
.wide { width: 105px; margin-right: 2px; }
.mont select { padding: 0 0 0 21px; }
.pct { width: 42px; }
.pct select { margin: 0; padding-right: 0; }
.sous { width: 90px; }
.sous select { padding: 0; }
.rate { width: 74px; margin-right: 2px; }
.brand select { padding: 0; }
.cour { width: 97px; margin-right: 2px; }
.tag { width: 35px; height: 18px; line-height: 18px; background: #f0f0f0; font-size: 11px; white-space: nowrap; overflow: hidden; flex: none; color: #000; }
.tag.grille { width: 38px; }
.tag.colonne { width: 44px; }
.num { width: 20px; height: 20px; background: #fff; padding-left: 2px; flex: none; }

.body { flex: 1; display: flex; min-height: 0; background: #f0f0f0; }
.sheet { flex: 1; display: flex; flex-direction: column; min-width: 0; background: #fff; border-top: 1px solid #5f6064; }
.sheetrow { flex: 1; display: flex; min-height: 0; }
.clip { flex: 1; overflow: hidden; min-width: 0; }
.grid { border-collapse: separate; border-spacing: 0; table-layout: fixed; width: 1313px; font-family: Lato, "Noto Sans", sans-serif; font-size: 12px; line-height: 15px; color: #000; }
.numcol { width: 26px; }
.grid th, .grid td { padding: 0; border-right: 1px solid #5f6064; overflow: hidden; white-space: pre; }
.grid thead th { height: 39px; padding-top: 1px; vertical-align: top; background: #4a4d82; color: #fff; font-weight: bold; line-height: 18px; border-bottom: 2px solid #5f6064; }
.grid .rn { background: #fff; color: #3a1a20; font-family: "Noto Sans", sans-serif; font-size: 10px; font-weight: normal; text-align: right; padding-right: 3px; border-right: 2px solid #77777b; border-bottom: 1px solid #a8a8a8; }
.grid thead .rn { background: #fff; }
.dot { display: block; width: 9px; height: 9px; border-radius: 5px; background: #a00028; margin-left: 3px; }
.grid td.a-start { padding: 0 0 2px 2px; text-align: left; }
.grid td.a-end { padding: 0 3px 2px 0; text-align: right; }
.grid td.a-center { text-align: center; }
.grid td.c-l { overflow: visible; }
.line td { height: 17px; }
.section td { height: 18px; background: #d3c9bf; font-weight: bold; }
.total td { height: 28px; border-bottom: 2px solid #5f6064; font-weight: bold; }
.short td { height: 19px; border-bottom: 1px solid #5f6064; font-weight: bold; }
.grid .total td, .grid .short td { padding-bottom: 0; }
.grid .total .c-l, .grid .short .c-l { text-align: right; padding-right: 3px; }
.sum td { height: 34px; background: #7fbfe2; border-bottom: 1px solid #5f6064; font-weight: bold; font-style: italic; }
.total .rn { border-bottom: 2px solid #5f6064; }
.short .rn, .sum .rn { border-bottom-color: #5f6064; }
.grid td.shade { background: #f0f0f0; }
.grid td.k-box { box-shadow: inset 0 0 0 2px #5f6064; }
.grid td.focus { box-shadow: inset 0 0 0 2px #3a0010; }
.grid td.k-hand, .grid td.k-button, .grid td.k-car, .grid td.k-warn { padding: 0; }
.grid td.k-warn { text-align: left; }
.cellbtn { display: grid; place-items: center; width: 100%; height: 26px; background: #eeeeee; border: 1px solid #d8d8d8; border-right: 2px solid #8a8a8e; border-bottom-color: #aaa; }
.hand { width: 13px; height: 13px; display: block; }
.carcell { display: flex; align-items: center; justify-content: space-between; }
.car { width: 13px; height: 12px; }
.carcell button { width: 12px; height: 16px; border: 1px solid #a8b4c0; background: #f2f5f9; display: grid; place-items: center; }
.carcell button::after { content: ""; border: 3px solid transparent; border-top: 3px solid #1464b4; border-bottom: 0; }
.total .carcell button { height: 24px; }
.warn { width: 12px; height: 12px; display: block; margin-left: 1px; }
.grid input { display: grid; place-items: center; width: 11px; height: 11px; margin: 0 auto; border: 2px solid #646464; background: #fff; }
.grid input:checked::after { content: ""; width: 5px; height: 3px; border: solid #101080; border-width: 0 0 2px 2px; transform: rotate(-45deg); }

.vbar { width: 17px; background: #f0f0f0; display: flex; flex-direction: column; align-items: center; flex: none; }
.vbar svg { width: 10px; height: 10px; margin: 4px 0; flex: none; }
.vbar .flip { transform: rotate(180deg); margin-top: auto; }
.vthumb { width: 16px; height: 51.5%; background: #cdcdcd; margin-top: 40px; flex: none; }
.hbar { height: 17px; background: #f0f0f0; display: flex; align-items: center; flex: none; padding-right: 18px; }
.hbar svg { width: 10px; height: 10px; margin: 0 3px; }
.toleft { transform: rotate(-90deg); }
.toright { transform: rotate(90deg); }
.hthumb { width: 85px; height: 17px; background: #cdcdcd; margin-left: auto; }

.side { width: 319px; margin-right: 1px; display: flex; background: #f0f0f0; border: 1px solid #dadada; border-bottom: 2px solid #7a7a7a; border-right: 2px solid #6a6a6a; padding: 6px 0 4px 5px; font-size: 12px; color: #3a0a10; }
.sidelist { flex: 1; background: #fbfaff; overflow: hidden; padding-right: 1px; }
.sidehead { height: 21px; margin: 2px 2px 3px 2px; padding-left: 9px; background: #4a4d86; color: #dfe3f6; display: flex; align-items: center; font-size: 12px; font-weight: bold; }
.sidehead svg { width: 12px; height: 12px; margin-right: 6px; fill: none; stroke: #fff; stroke-width: 1.6; }
.siderow { display: flex; align-items: center; width: 100%; height: 25px; padding-left: 28px; white-space: nowrap; text-align: left; }
.siderow svg { width: 16px; height: 16px; margin-right: 9px; }
.siderow.sub { padding-left: 53px; font-weight: bold; }
.siderow.group, .siderow.active { height: 23px; margin: 1px 0; padding-left: 7px; border: 1px solid #3a0a10; border-radius: 5px 0 0 5px; background: #fff; font-weight: bold; }
.siderow.active { background: #4a4d86; color: #dfe3f6; }
.minus { width: 16px; height: 16px; background: #4a4d86; display: grid; place-items: center; margin-right: 5px; }
.minus::after { content: ""; width: 10px; height: 2px; background: #fff; }
.side .vbar { width: 20px; align-items: flex-start; }
.side .vbar svg { margin: 5px 3px; }
.side .vbar .flip { margin-top: auto; }
.side .vthumb { width: 15px; height: 190px; margin: 0; }

.tabs { display: flex; height: 31px; background: #f1eeed; border-bottom: 1px solid #d4d4d4; flex: none; font-size: 12px; color: #3a0a10; }
.tab { display: flex; align-items: center; height: 30px; border-top: 1px solid #3a0a10; border-right: 2px solid #3a0a10; border-left: 5px solid; padding-left: 5px; flex: none; }
.tab svg { width: 20px; height: 20px; }
.tab span { margin-left: 6px; }
.tab i { margin: 0 7px 6px auto; border: 3px solid transparent; border-bottom: 3px solid #3a0a10; border-top: 0; }
.tab.yellow { border-left-color: #f2a900; }
.tab.orange { border-left-color: #ee7f00; }
.tab.sky { border-left-color: #5fb4dc; }
.tab.cyan { border-left-color: #1e94c8; }
.tab.blue { border-left-color: #175c94; }
.tab.purple { border-left-color: #7c4a84; }
.tab.indigo { border-left-color: #4a4d86; }
.tab.active { background: #4a4d86; color: #dfe3f6; font-weight: bold; }
.tab.active i { border-bottom-color: #fff; }

.status { display: flex; justify-content: flex-end; height: 22px; flex: none; background: #f0f0f0; font-family: "Noto Sans", sans-serif; font-size: 11px; color: #111; }
.status span { border-left: 1px solid #d0d0d0; padding-left: 4px; line-height: 22px; white-space: nowrap; }
.s1 { width: 344px; }
.s2 { width: 172px; }
.s3 { width: 172px; }
.s4 { width: 14px; }

.dialog { position: absolute; left: 665px; top: 269px; width: 403px; height: 347px; border: 1px solid #5c5c60; background: #f0f0f0; display: flex; flex-direction: column; font-family: Roboto, "Noto Sans", sans-serif; font-size: 11px; color: #000; }
.dtitle { height: 30px; background: #fff; display: flex; align-items: center; justify-content: space-between; padding: 0 8px; flex: none; font-family: "Open Sans", "Noto Sans", sans-serif; font-size: 12px; }
.dtitle button { width: 12px; height: 12px; display: grid; margin-right: 1px; }
.dtitle svg { width: 12px; height: 12px; fill: none; stroke: #111; stroke-width: 1.2; }
.dbody { flex: 1; display: flex; flex-direction: column; align-items: flex-start; padding: 17px 10px 12px 7px; }
.opt { display: flex; align-items: center; height: 28px; padding-left: 4px; white-space: nowrap; }
.opt input { width: 13px; height: 13px; border: 1px solid #333; background: #fff; margin-right: 2px; flex: none; }
.opt.red { margin: 20px 0 24px; padding: 0 2px 0 1px; border: 3px solid #d8232a; }
.marge { display: flex; align-items: center; align-self: stretch; padding-left: 119px; gap: 11px; margin: 10px 0 21px; }
.marge input { width: 60px; height: 23px; border: 1px solid #cccccc; padding-left: 5px; color: #7a7a7a; font-size: 13px; box-shadow: inset 0 0 0 1px #fff; }
.dbtns { display: flex; gap: 11px; margin-top: auto; align-self: flex-end; }
.dbtns button { width: 73px; height: 21px; background: #e1e1e1; border: 1px solid #adadad; }
.dbtns .ok { border: 2px solid #0a76cc; }
</style>
